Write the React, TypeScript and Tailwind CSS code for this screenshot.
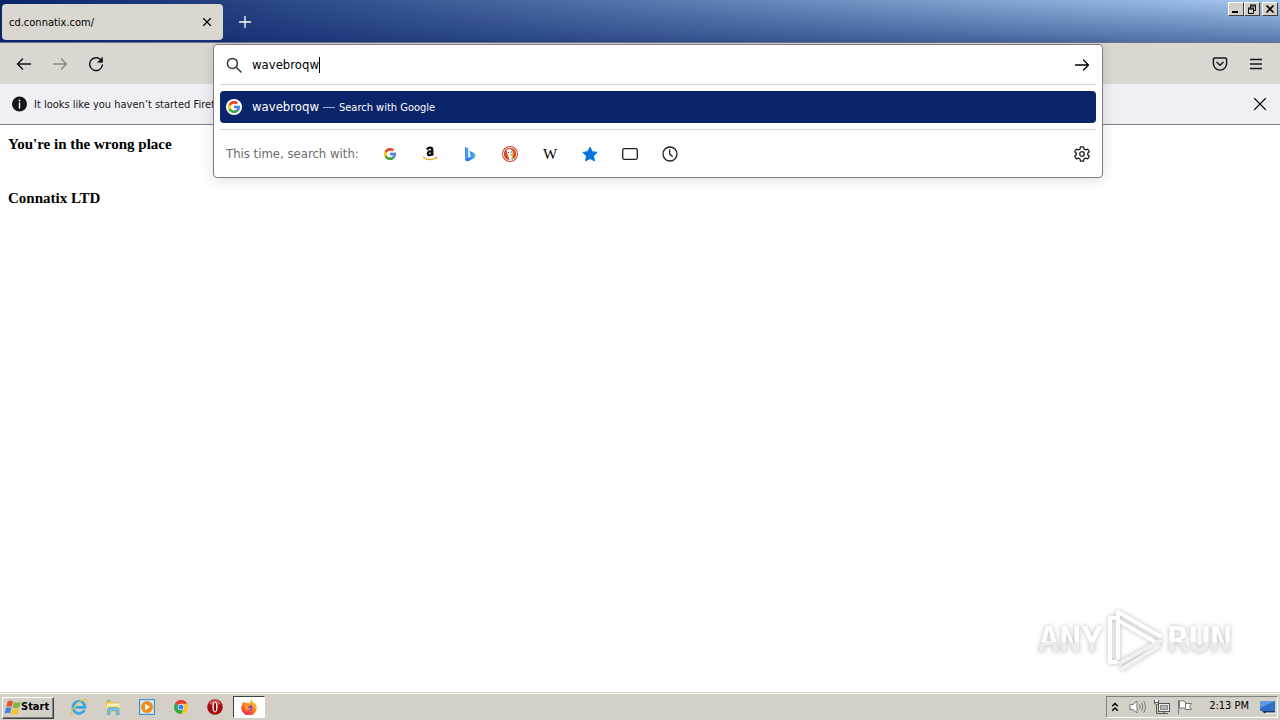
import React from 'react'
import { X } from 'lucide-react'

function GoogleIcon({ className }: { className: string }) {
  return (
    <svg viewBox="4 4 40 40" className={className} aria-hidden="true">
      <path fill="#FFC107" d="M43.611,20.083H42V20H24v8h11.303c-1.649,4.657-6.08,8-11.303,8c-6.627,0-12-5.373-12-12c0-6.627,5.373-12,12-12c3.059,0,5.842,1.154,7.961,3.039l5.657-5.657C34.046,6.053,29.268,4,24,4C12.955,4,4,12.955,4,24c0,11.045,8.955,20,20,20c11.045,0,20-8.955,20-20C44,22.659,43.862,21.35,43.611,20.083z" />
      <path fill="#EA4335" d="M6.306,14.691l6.571,4.819C14.655,15.108,18.961,12,24,12c3.059,0,5.842,1.154,7.961,3.039l5.657-5.657C34.046,6.053,29.268,4,24,4C16.318,4,9.656,8.337,6.306,14.691z" />
      <path fill="#34A853" d="M24,44c5.166,0,9.86-1.977,13.409-5.192l-6.19-5.238C29.211,35.091,26.715,36,24,36c-5.202,0-9.619-3.317-11.283-7.946l-6.522,5.025C9.505,39.556,16.227,44,24,44z" />
      <path fill="#4285F4" d="M43.611,20.083H42V20H24v8h11.303c-0.792,2.237-2.231,4.166-4.087,5.571l6.19,5.238C36.971,39.205,44,34,44,24C44,22.659,43.862,21.35,43.611,20.083z" />
    </svg>
  )
}

// 16px outline icons share one set of stroke settings
function Outline({ children, className = 'size-4', width = 1.3 }: { children: React.ReactNode; className?: string; width?: number }) {
  return (
    <svg viewBox="0 0 16 16" fill="none" stroke="currentColor" strokeWidth={width} strokeLinecap="round" strokeLinejoin="round" className={className} aria-hidden="true">
      {children}
    </svg>
  )
}

const AmazonIcon = () => (
  <svg viewBox="0 0 16 16" className="size-4" aria-hidden="true">
    <path d="M5.300 3.700C5.700 2.200 6.500 1.700 8 1.700 9.600 1.700 10.300 2.500 10.300 4V7.300C10.300 8.200 10.500 8.700 11.100 9.300M10 5.200C7.600 5.100 5.900 5.700 5.900 7.500 5.900 8.600 6.500 9.200 7.500 9.200 9.200 9.200 10.200 7.800 10.100 5.200" fill="none" stroke="#111" strokeWidth="2.300" />
    <path d="M1.400 11.200C5 14.300 10.300 14.500 14 12" fill="none" stroke="#f5a623" strokeWidth="1.300" strokeLinecap="round" />
    <path d="M12.600 11.200 15 11.100 14.400 13.400" fill="none" stroke="#f5a623" strokeWidth="0.900" />
  </svg>
)

const BingIcon = () => (
  <svg viewBox="0 0 16 16" className="size-4" aria-hidden="true">
    <defs>
      <linearGradient id="bing-bowl" x1="0" y1="0" x2="1" y2="0">
        <stop offset="0" stopColor="#2860dc" />
        <stop offset="1" stopColor="#49b4f5" />
      </linearGradient>
    </defs>
    <path d="M3 .8 6.300 2.200V11.500L4.500 15C3.500 14.600 3 13.800 3 12.800z" fill="#4a94fa" />
    <path d="M7.400 4.800 11.600 6.800C13.600 7.900 13.900 10.200 12.600 11.800L7 15C5.500 15.800 3.700 15.100 3.200 13.500L8.800 10.500 8.300 8z" fill="url(#bing-bowl)" />
  </svg>
)

const DuckIcon = () => (
  <svg viewBox="0 0 16 16" className="size-4" aria-hidden="true">
    <circle cx="8" cy="8" r="8" fill="#d4472a" />
    <circle cx="8" cy="8" r="6.600" fill="none" stroke="#fff" strokeWidth="0.900" />
    <path d="M4.600 4.600C5.200 2.600 9.600 2.600 10.600 5.200 11.100 6.700 10.300 8.200 10.200 9.700L11.300 13.300 7.500 14C6.900 11.400 4.800 8 4.600 4.600z" fill="#fff" />
    <path d="M8.300 7.900C9.800 7.100 12.300 7 12.500 7.600 12.600 8.200 10.300 8.400 9.700 8.900 10.600 9.400 11.900 9.200 11.800 9.700 11.300 10.500 8.400 10.300 8.200 9.100z" fill="#fdb913" />
    <path d="M9.300 11.200 11.800 10.800 11.600 13 9.600 12.500z" fill="#5bbb46" />
    <circle cx="9.200" cy="6" r="0.700" fill="#2d4f8e" />
    <circle cx="6.400" cy="6.400" r="0.700" fill="#2d4f8e" />
  </svg>
)

const StarIcon = () => (
  <svg viewBox="0 0 16 16" className="size-4" aria-hidden="true">
    <path d="M8 1.200 10.200 5.700 15.100 6.400 11.500 9.900 12.400 14.800 8 12.500 3.600 14.800 4.500 9.900.9 6.400 5.800 5.700z" fill="#0073dd" stroke="#0073dd" strokeLinejoin="round" />
  </svg>
)

const SEARCH_ENGINES = [
  { name: 'Google', icon: <GoogleIcon className="size-3" /> },
  { name: 'Amazon', icon: <AmazonIcon /> },
  { name: 'Bing', icon: <BingIcon /> },
  { name: 'DuckDuckGo', icon: <DuckIcon /> },
  { name: 'Wikipedia', icon: <span className="font-['Liberation_Serif',serif] text-[15px] leading-4 text-black">W</span> },
  { name: 'Bookmarks', icon: <StarIcon /> },
  { name: 'Tabs', icon: <Outline><rect x="0.700" y="2.700" width="14.600" height="10.600" rx="1.500" /></Outline> },
  { name: 'History', icon: <Outline><circle cx="8" cy="8" r="7" /><path d="M7.700 4V8.200L10.300 10.300" /></Outline> },
]

const QUICK_LAUNCH = [
  {
    name: 'Internet Explorer',
    icon: (
      <svg viewBox="0 0 18 18" className="size-[18px]" aria-hidden="true">
        <path d="M14.400 12A6 6 0 1 1 15 9.300H5.500" fill="none" stroke="#3aa5e0" strokeWidth="2.800" />
        <path d="M3.300 16.300C.5 17.300.5 13.800 4.200 9.200 8.200 4.200 14.300.2 16.400 1.600 17.400 2.300 17 3.900 16.200 5.400" fill="none" stroke="#e8c33c" strokeWidth="1.200" />
        <path d="M6 6.300C7.300 4.300 10.600 4 12.300 6.200" fill="none" stroke="#a9dcf5" strokeWidth="0.900" />
      </svg>
    ),
  },
  {
    name: 'Windows Explorer',
    icon: (
      <svg viewBox="0 0 18 18" className="size-[18px]" aria-hidden="true">
        <path d="M1.500 3H7L8.500 4.500H16V14H1.500z" fill="#dfc25c" />
        <path d="M3 5.500H15.500V9H3z" fill="#fbf3c4" />
        <path d="M1.500 7.500H16.800L16 14.500H2z" fill="#f3dd8a" />
        <path d="M3.500 16.500V11.500C3.500 10.300 4.500 9.800 5.500 9.800H13C14 9.800 15 10.300 15 11.500V16.500H12.300V12.800H6.200V16.500z" fill="#7cc4e6" stroke="#4996bd" strokeWidth="0.700" />
        <path d="M3 2.500H6" stroke="#5eb55f" />
      </svg>
    ),
  },
  {
    name: 'Media Player',
    icon: (
      <svg viewBox="0 0 18 18" className="size-[18px]" aria-hidden="true">
        <rect x="1.500" y="1.500" width="15" height="15" fill="#b8d9f2" stroke="#4a90c8" />
        <rect x="3" y="3" width="12" height="12" fill="#dfeffa" />
        <circle cx="9" cy="9" r="6" fill="#f28a1c" />
        <path d="M7.200 5.800 12.200 9 7.200 12.200z" fill="#fff" />
      </svg>
    ),
  },
  {
    name: 'Chrome',
    icon: (
      <svg viewBox="0 0 48 48" className="size-3.5" aria-hidden="true">
        <path d="M24 24 3.200 12A24 24 0 0 1 44.800 12z" fill="#e33b2e" />
        <path d="M24 24 44.800 12A24 24 0 0 1 24 48z" fill="#fcc31e" />
        <path d="M24 24 24 48A24 24 0 0 1 3.200 12z" fill="#2da94f" />
        <path d="M24 13H45.200L33.500 29.500z" fill="#fcc31e" />
        <path d="M33.500 29.500 24 48 14.500 29.500z" fill="#2da94f" />
        <circle cx="24" cy="24" r="11" fill="#fff" />
        <circle cx="24" cy="24" r="8.700" fill="#3b7ded" />
      </svg>
    ),
  },
  {
    name: 'Opera',
    icon: (
      <svg viewBox="0 0 16 16" className="size-4" aria-hidden="true">
        <circle cx="8" cy="8" r="7.800" fill="#a70e13" />
        <path d="M2 4.500A7 7 0 0 1 14 4.500C11 6.500 5 6.500 2 4.500z" fill="#d9575a" />
        <ellipse cx="8" cy="8" rx="2.600" ry="5.400" fill="#fff" />
        <ellipse cx="8" cy="8" rx="1.200" ry="4.600" fill="#8c0c10" />
      </svg>
    ),
  },
]

const FirefoxIcon = () => (
  <svg viewBox="0 0 16 16" className="size-4" aria-hidden="true">
    <defs>
      <linearGradient id="fox" x1="0.900" y1="0" x2="0.200" y2="1">
        <stop offset="0" stopColor="#ffe14a" />
        <stop offset="0.450" stopColor="#ff8a1f" />
        <stop offset="1" stopColor="#f5205a" />
      </linearGradient>
    </defs>
    <path d="M1.200 5.200C1.600 3.900 2.200 3 3 2.300L3.400 4.100C4.200 3.700 5 3.600 5.800 3.800L9.200 4.300C9 2.600 9.500 1.200 10.600.3 11 2.400 12.400 3 13.400 4.300L13.900 3.900C15.300 5.500 15.900 7.200 15.700 9A7.700 7.700 0 0 1 .3 8.600C.3 7.300.6 6.200 1.200 5.200z" fill="url(#fox)" />
    <circle cx="8.300" cy="8.900" r="3" fill="#8a45d0" />
    <path d="M3.500 5.600C5.300 4.900 6.500 5.500 7.300 6.200L9.200 6.500C8.800 7.600 7.200 7.400 7 8.300 7 9.200 8.300 9.700 10.200 9 9.300 11.600 5.400 12.200 4.100 9.700z" fill="#ff9a1f" />
  </svg>
)

const WindowsFlag = () => (
  <svg viewBox="0 1 15 14" className="h-4 w-[17px]" aria-hidden="true">
    <path d="M3.200 2.200C4.800 1.200 6.400 1.300 8 2.200L6.800 7.200C5.200 6.300 3.600 6.300 2 7.200z" fill="#e8542a" />
    <path d="M8.800 2.600C10.400 3.500 12.200 3.600 14.800 2.400L13.500 7.300C11.500 8.400 9.500 8.400 7.600 7.500z" fill="#7ab648" />
    <path d="M1.800 8C3.300 7.100 5 7.200 6.500 8.100L5.300 12.900C3.800 12 2.200 12 .5 12.900z" fill="#3d86d6" />
    <path d="M7.400 8.400C9.200 9.300 11.200 9.300 13.200 8.300L12 13C10 14.100 8 14.100 6.100 13.200z" fill="#f9c22e" />
  </svg>
)

function CaptionButton({ label, children }: { label: string; children: React.ReactNode }) {
  return (
    <button type="button" aria-label={label} className="flex h-3.5 w-4 items-center justify-center border border-t-white border-r-[#404040] border-b-[#404040] border-l-white bg-[#d4d0c8] text-black">
      <svg viewBox="0 0 12 10" className="h-2.5 w-3" fill="none" stroke="currentColor" aria-hidden="true">
        {children}
      </svg>
    </button>
  )
}

function TabStrip() {
  return (
    <header className="flex h-[43px] items-start border-b border-[#66728c] bg-[linear-gradient(to_bottom,rgba(10,36,106,0)_0%,rgba(10,36,106,0.5)_100%),linear-gradient(to_right,#0a246a,#a6caf0)] pl-0.5">
      <div className="mt-1 flex h-9 w-[221px] items-center rounded bg-[#dad7d1] pr-1.5 pl-[7px] text-[11px] text-black">
        <span className="flex-1 pt-0.5">cd.connatix.com/</span>
        <button type="button" aria-label="Close tab" className="flex size-5 items-center justify-center">
          <X className="size-3.5" strokeWidth={2} />
        </button>
      </div>
      <button type="button" aria-label="New tab" className="mt-1 ml-1 flex size-9 items-center justify-center text-white">
        <Outline className="size-4"><path d="M8 2.500V13.500M2.500 8H13.500" /></Outline>
      </button>
      <div className="ml-auto flex pt-0.5 pr-0.5">
        <CaptionButton label="Minimize"><path d="M2 8H8" strokeWidth="2" /></CaptionButton>
        <CaptionButton label="Restore">
          <path d="M4 1H10M4 2H10M4.500 2V4M9.500 2V6.500H8M2 4H8M2 5H8M2.500 5V9.500H7.500V5" />
        </CaptionButton>
        <div className="ml-0.5">
          <CaptionButton label="Close"><path d="M2.500 1.500 9.500 8.500M9.500 1.500 2.500 8.500" strokeWidth="1.700" /></CaptionButton>
        </div>
      </div>
    </header>
  )
}

function UrlBar() {
  return (
    <div className="absolute inset-x-0 top-px rounded border border-[#7d7d82] bg-white px-1.5 shadow-[0_2px_14px_rgba(0,0,0,0.13)]">
      <div className="flex h-10 items-center border-b border-[#d8d5d0] px-1.5 text-[13px] text-black">
        <Outline className="size-4 text-[#38383d]" width={1.5}><circle cx="6.400" cy="6.400" r="5" /><path d="M10.200 10.200 15 15" /></Outline>
        <input aria-label="Search or enter address" defaultValue="wavebroqw" className="ml-2.5 field-sizing-content outline-none" />
        <span className="h-4 w-px bg-black" />
        <button type="button" aria-label="Go" className="ml-auto">
          <Outline><path d="M1.500 8H14.500M9.500 3 14.500 8 9.500 13" /></Outline>
        </button>
      </div>
      <button type="button" className="my-1.5 flex h-8 w-full items-center rounded bg-[#0a246a] px-1.5 text-left text-white">
        <span className="flex size-4 items-center justify-center rounded-full bg-white">
          <GoogleIcon className="size-3" />
        </span>
        <span className="ml-2.5 text-[13px]">wavebroqw</span>
        <span className="mx-1 h-px w-3 bg-[#9aaede]" />
        <span className="pt-0.5 text-[11px]">Search with Google</span>
      </button>
      <div className="flex h-12 items-center border-t border-[#d8d5d0] px-1.5">
        <span className="w-36 text-[13px] text-[#6b6b6e]">This time, search with:</span>
        {SEARCH_ENGINES.map((engine) => (
          <button key={engine.name} type="button" aria-label={engine.name} className="flex h-8 w-10 items-center justify-center text-[#1f1f25]">
            {engine.icon}
          </button>
        ))}
        <button type="button" aria-label="Search settings" className="ml-auto text-[#1f1f25]">
          <Outline>
            <path d="M6.500.8H9.500L10 3 11.600 3.900 13.800 3.200 15.300 5.800 13.700 7.300V8.700L15.300 10.200 13.800 12.800 11.600 12.100 10 13 9.500 15.200H6.500L6 13 4.400 12.100 2.200 12.800.7 10.200 2.300 8.700V7.300L.7 5.800 2.200 3.200 4.400 3.900 6 3z" />
            <circle cx="8" cy="8" r="2.300" />
          </Outline>
        </button>
      </div>
    </div>
  )
}

function Toolbar() {
  const button = 'flex size-9 items-center justify-center'
  return (
    <nav className="relative z-10 flex h-[41px] items-center bg-[#dad7d1] px-1.5 text-[#15141a]">
      <button type="button" aria-label="Back" className={button}>
        <Outline width={1.5}><path d="M14.500 8H1.500M6.500 3 1.500 8 6.500 13" /></Outline>
      </button>
      <button type="button" aria-label="Forward" disabled className={`${button} opacity-40`}>
        <Outline width={1.5}><path d="M1.500 8H14.500M9.500 3 14.500 8 9.500 13" /></Outline>
      </button>
      <button type="button" aria-label="Reload" className={button}>
        <Outline width={1.5}>
          <path d="M13.900 5.500A6.400 6.400 0 1 0 14.400 9" />
          <path d="M14.400 1.800V6.200H10z" fill="currentColor" strokeWidth="0.800" />
        </Outline>
      </button>
      <div className="relative mx-[99px] flex-1 self-stretch">
        <UrlBar />
      </div>
      <button type="button" aria-label="Save to Pocket" className={button}>
        <Outline width={1.4}>
          <path d="M2.500 2H13.500Q14.600 2 14.600 3.100V7.500A6.600 6.600 0 0 1 1.400 7.500V3.100Q1.400 2 2.500 2zM4.900 6.300 8 9.300 11.100 6.300" />
        </Outline>
      </button>
      <button type="button" aria-label="Open menu" className={button}>
        <Outline><path d="M2.500 3.500H13.500M2.500 8H13.500M2.500 12.500H13.500" /></Outline>
      </button>
    </nav>
  )
}

function Notification() {
  return (
    <div className="flex h-[41px] items-center border-b border-[#7d7d82] bg-[#f0f0f4] px-3 text-[11px] text-[#15141a]">
      <svg viewBox="0 0 16 16" className="mr-1.5 size-4 shrink-0" aria-hidden="true">
        <circle cx="7.500" cy="8" r="7.500" fill="#15141a" />
        <circle cx="7.500" cy="4.500" r="0.900" fill="#fff" />
        <path d="M7.500 7V12" stroke="#fff" strokeWidth="1.400" strokeLinecap="round" />
      </svg>
      <p className="flex-1 pt-0.5">It looks like you haven’t started Firefox</p>
      <button type="button" aria-label="Dismiss">
        <Outline><path d="M2.500 2.500 13.500 13.500M13.500 2.500 2.500 13.500" /></Outline>
      </button>
    </div>
  )
}

function Watermark() {
  const word = "bg-linear-to-b from-white from-55% to-[#ececec] to-55% bg-clip-text font-['DejaVu_Sans_Mono',monospace] text-[36px] leading-[48px] font-bold text-transparent"
  return (
    <div className="absolute right-12 bottom-5 flex items-center gap-1 drop-shadow-[0_0_2px_rgba(0,0,0,0.28)]">
      <span className={word}>ANY</span>
      <svg viewBox="0 0 56 64" className="h-16 w-14" fill="none" strokeWidth="4" strokeLinejoin="round" strokeLinecap="round" aria-hidden="true">
        <path d="M9 10H3V54H9" stroke="#fff" />
        <path d="M11 50V4L53 28" stroke="#fff" />
        <path d="M12 13 48 34" stroke="#fff" />
        <path d="M53 33 13 55M52 38 15 61" stroke="#f1f1f1" />
      </svg>
      <span className={word}>RUN</span>
    </div>
  )
}

function Taskbar() {
  return (
    <footer className="flex h-7 items-center border-t border-[#d4d0c8] bg-[#d4d0c8] px-0.5 text-[11px] text-black shadow-[inset_0_1px_0_#fff]">
      <button type="button" className="mt-0.5 flex h-[22px] w-[52px] items-center border border-t-white border-r-[#404040] border-b-[#404040] border-l-white pl-px font-bold shadow-[inset_-1px_-1px_0_#808080]">
        <WindowsFlag />
        Start
      </button>
      <div className="ml-2 flex">
        {QUICK_LAUNCH.map((app) => (
          <button key={app.name} type="button" aria-label={app.name} className="flex h-[22px] w-[34px] items-center justify-center">
            {app.icon}
          </button>
        ))}
        <button type="button" aria-label="Firefox" className="ml-px flex h-[22px] w-8 items-center justify-center border border-t-[#404040] border-r-white border-b-white border-l-[#404040] bg-white">
          <FirefoxIcon />
        </button>
      </div>
      <div className="ml-auto flex h-[22px] items-center border border-t-[#808080] border-r-white border-b-white border-l-[#808080] pl-1">
        <button type="button" aria-label="Show hidden icons">
          <svg viewBox="0 0 8 10" className="h-2.5 w-2" fill="none" stroke="#000" strokeWidth="1.500" aria-hidden="true">
            <path d="M1.200 4.300 4 1.500 6.800 4.300M1.200 8.800 4 6 6.800 8.800" />
          </svg>
        </button>
        <svg viewBox="0 0 18 16" className="ml-2.5 h-4 w-[18px]" fill="none" stroke="#777" aria-hidden="true">
          <path d="M1 5.500H4L8 2V14L4 10.500H1z" fill="#fff" />
          <path d="M10.500 5.500Q12 8 10.500 10.500M12.700 3.800Q15 8 12.700 12.200M14.800 2.300Q18 8 14.800 13.700" />
        </svg>
        <svg viewBox="0 0 18 16" className="ml-1.5 h-4 w-[18px]" fill="none" stroke="#555" aria-hidden="true">
          <rect x="5.500" y="4.500" width="11" height="8" fill="#eee" />
          <rect x="7.500" y="6.500" width="7" height="4" fill="#b5b5b5" stroke="#888" />
          <path d="M7 14.500H15M11 12.500V14.500M3.500 6V14.500H7" />
          <path d="M1.500 1V4.500Q3.500 6.500 5.500 4.500V1M1.500 3.500H5.500" fill="#fff" />
        </svg>
        <svg viewBox="0 0 16 16" className="ml-1.5 size-4" fill="#fff" stroke="#777" aria-hidden="true">
          <path d="M2.500 2Q5.500 1 8.500 3V9.500Q5.500 8 2.500 9.500z" />
          <path d="M8.500 4.500H14.500L12.500 7.500 14.500 10.500H8.500z" />
          <path d="M1.500 1V15" />
        </svg>
        <time className="mr-2.5 ml-4">2:13 PM</time>
        <svg viewBox="0 0 18 16" className="h-4 w-[18px]" aria-hidden="true">
          <path d="M1 2H16V12H1z" fill="#2f6fc4" />
          <path d="M1 2H16L1 9z" fill="#5d9be4" />
          <path d="M1 12H16V14H5L3 12z" fill="#1d3460" />
          <path d="M7 14H17" stroke="#fff" />
        </svg>
      </div>
    </footer>
  )
}

export default function App() {
  return (
    <div className="flex min-h-screen flex-col bg-white font-['DejaVu_Sans_Condensed','DejaVu_Sans',sans-serif]">
      <TabStrip />
      <Toolbar />
      <Notification />
      <main className="relative flex-1 p-2 pt-2.5 font-['Liberation_Serif',serif] text-[15px] leading-[18px] font-bold text-black">
        <h1>You're in the wrong place</h1>
        <h2 className="mt-9">Connatix LTD</h2>
        <Watermark />
      </main>
      <Taskbar />
    </div>
  )
}
